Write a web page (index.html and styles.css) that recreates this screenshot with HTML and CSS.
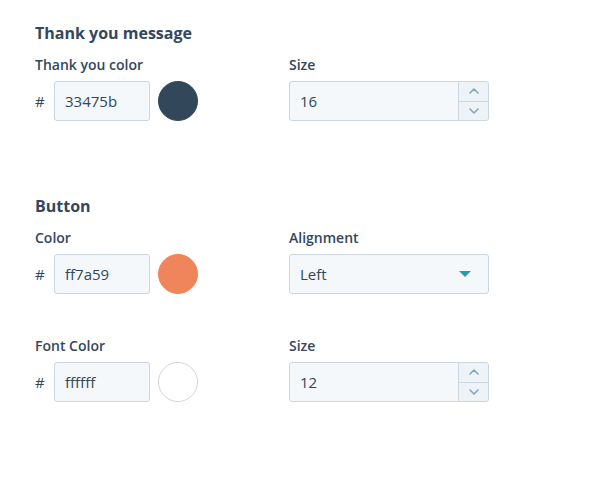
FILE: index.html
```html
<!DOCTYPE html>
<html>
<head>
<meta charset="utf-8">
<link rel="stylesheet" href="styles.css">
</head>
<body>
<div class="panel">
  <section class="group">
    <h2 class="group-title">Thank you message</h2>
    <div class="grid">
      <div class="field">
        <label class="label">Thank you color</label>
        <div class="color-row">
          <span class="hash">#</span>
          <div class="input hex">33475b</div>
          <span class="swatch" style="background:#33475b;border-color:#33475b"></span>
        </div>
      </div>
      <div class="field">
        <label class="label">Size</label>
        <div class="input number">
          <span class="num-value">16</span>
          <span class="stepper">
            <span class="step"><svg width="10" height="6" viewBox="0 0 10 6"><path d="M1 5 L5 1 L9 5" fill="none" stroke="#7fa7bb" stroke-width="1.6" stroke-linecap="round" stroke-linejoin="round"/></svg></span>
            <span class="step"><svg width="10" height="6" viewBox="0 0 10 6"><path d="M1 1 L5 5 L9 1" fill="none" stroke="#7fa7bb" stroke-width="1.6" stroke-linecap="round" stroke-linejoin="round"/></svg></span>
          </span>
        </div>
      </div>
    </div>
  </section>

  <section class="group group-button">
    <h2 class="group-title">Button</h2>
    <div class="grid">
      <div class="field">
        <label class="label">Color</label>
        <div class="color-row">
          <span class="hash">#</span>
          <div class="input hex">ff7a59</div>
          <span class="swatch" style="background:#f0845b;border-color:#f0845b"></span>
        </div>
      </div>
      <div class="field">
        <label class="label">Alignment</label>
        <div class="input select">
          <span>Left</span>
          <svg class="caret" width="12" height="6" viewBox="0 0 12 6"><path d="M0 0 L12 0 L6 6 Z" fill="#2d96b0"/></svg>
        </div>
      </div>
      <div class="field">
        <label class="label">Font Color</label>
        <div class="color-row">
          <span class="hash">#</span>
          <div class="input hex">ffffff</div>
          <span class="swatch" style="background:#ffffff;border-color:#cfd6de"></span>
        </div>
      </div>
      <div class="field">
        <label class="label">Size</label>
        <div class="input number">
          <span class="num-value">12</span>
          <span class="stepper">
            <span class="step"><svg width="10" height="6" viewBox="0 0 10 6"><path d="M1 5 L5 1 L9 5" fill="none" stroke="#7fa7bb" stroke-width="1.6" stroke-linecap="round" stroke-linejoin="round"/></svg></span>
            <span class="step"><svg width="10" height="6" viewBox="0 0 10 6"><path d="M1 1 L5 5 L9 1" fill="none" stroke="#7fa7bb" stroke-width="1.6" stroke-linecap="round" stroke-linejoin="round"/></svg></span>
          </span>
        </div>
      </div>
    </div>
  </section>
</div>
</body>
</html>
```
FILE: styles.css
```css
html, body {
  margin: 0;
  padding: 0;
  background: #ffffff;
}
body {
  font-family: "Open Sans", "Noto Sans", sans-serif;
  color: #33475b;
}
.panel {
  padding: 22px 0 0 35px;
}
.group-title {
  margin: 0 0 11px 0;
  font-size: 16px;
  line-height: 22px;
  font-weight: 700;
  color: #33475b;
}
.group-button {
  margin-top: 74px;
}
.grid {
  display: grid;
  grid-template-columns: 254px 200px;
  row-gap: 42px;
}
.field {
  display: flex;
  flex-direction: column;
}
.label {
  display: block;
  font-size: 14px;
  line-height: 20px;
  font-weight: 600;
  margin-bottom: 6px;
}
.color-row {
  display: flex;
  align-items: center;
  height: 40px;
}
.hash {
  width: 19px;
  font-size: 15px;
  color: #33475b;
}
.input {
  box-sizing: border-box;
  height: 40px;
  border: 1px solid #cbd6e2;
  border-radius: 3px;
  background: #f5f8fa;
  font-size: 15px;
  color: #33475b;
  display: flex;
  align-items: center;
}
.hex {
  width: 96px;
  padding-left: 10px;
}
.swatch {
  box-sizing: border-box;
  width: 40px;
  height: 40px;
  border-radius: 50%;
  border: 1px solid;
  margin-left: 8px;
}
.number {
  width: 200px;
  padding-left: 10px;
  justify-content: space-between;
  align-items: stretch;
}
.num-value {
  display: flex;
  align-items: center;
}
.stepper {
  display: flex;
  flex-direction: column;
  width: 29px;
  border-left: 1px solid #cbd6e2;
  background: #eef3f7;
  border-radius: 0 3px 3px 0;
}
.step {
  flex: 1;
  display: flex;
  align-items: center;
  justify-content: center;
}
.step + .step {
  border-top: 1px solid #cbd6e2;
}
.select {
  width: 200px;
  padding: 0 17px 0 10px;
  justify-content: space-between;
}
.caret {
  display: block;
}
```
